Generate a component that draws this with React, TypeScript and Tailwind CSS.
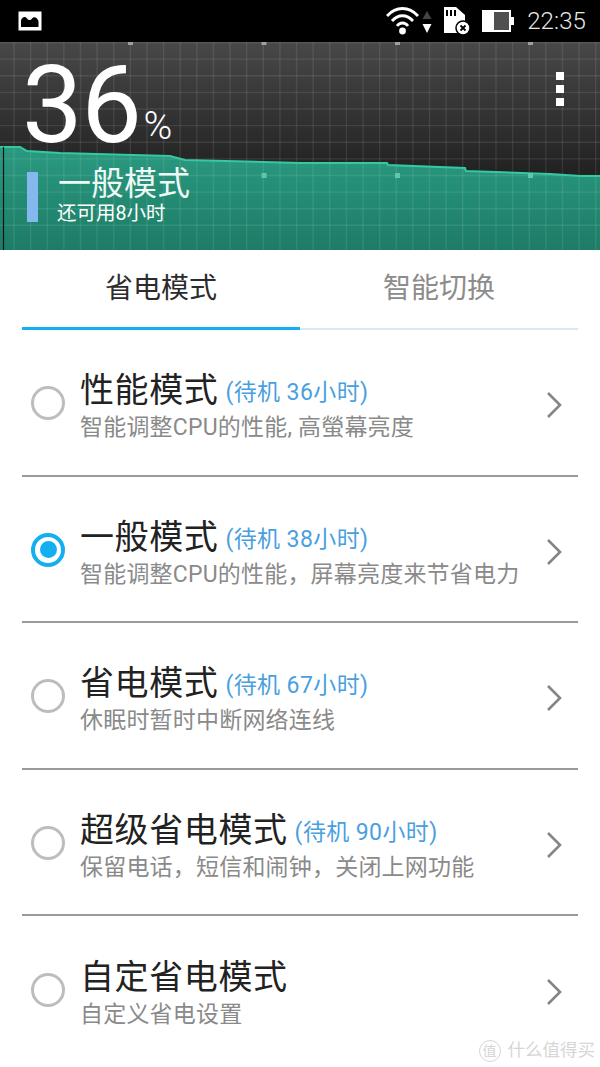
/**
 * Battery saver screen - power modes list with battery history header
 */

const FONT = 'font-["Roboto","Noto_Sans_CJK_SC",sans-serif]';

const modes = [
  { title: '性能模式', standby: '(待机 36小时)', desc: '智能调整CPU的性能, 高螢幕亮度', selected: false },
  { title: '一般模式', standby: '(待机 38小时)', desc: '智能调整CPU的性能，屏幕亮度来节省电力', selected: true },
  { title: '省电模式', standby: '(待机 67小时)', desc: '休眠时暂时中断网络连线', selected: false },
  { title: '超级省电模式', standby: '(待机 90小时)', desc: '保留电话，短信和闹钟，关闭上网功能', selected: false },
  { title: '自定省电模式', standby: '', desc: '自定义省电设置', selected: false },
];

const gridX = Array.from({ length: 36 }, (_, i) => 14 + i * 16.62);
const gridY = Array.from({ length: 12 }, (_, i) => 0.5 + i * 16.62);
const line = '0,105 20,105 27,109 60,111 170,114 185,118 300,121 387,121 388,123 465,126 466,129 550,132 580,134 600,134';

function BatteryChart() {
  return (
    <svg className="absolute inset-0" width="600" height="208" viewBox="0 0 600 208">
      <defs>
        <linearGradient id="sky" x1="0" y1="0" x2="0" y2="1">
          <stop offset="0" stopColor="#484848" />
          <stop offset="0.7" stopColor="#1d1d1d" />
          <stop offset="1" stopColor="#1d1d1d" />
        </linearGradient>
        <linearGradient id="fill" x1="0" y1="0" x2="0" y2="1">
          <stop offset="0" stopColor="#2a9a80" />
          <stop offset="1" stopColor="#1d7c66" />
        </linearGradient>
      </defs>
      <rect width="600" height="208" fill="url(#sky)" />
      <polygon points={`${line} 600,208 0,208`} fill="url(#fill)" />
      {gridX.map((x) => (
        <line key={x} x1={x} x2={x} y1="0" y2="208" stroke="#fff" strokeOpacity="0.09" strokeWidth="1.4" />
      ))}
      {gridY.map((y) => (
        <line key={y} x1="0" x2="600" y1={y} y2={y} stroke="#fff" strokeOpacity="0.09" strokeWidth="1.4" />
      ))}
      <polyline points={line} fill="none" stroke="#35c9a2" strokeWidth="2" />
      <line x1="3.5" x2="3.5" y1="105" y2="208" stroke="#0c1512" strokeWidth="1.2" />
      {[130.5, 264, 397.5, 530.5].map((x) => (
        <rect key={x} x={x - 2.5} y="0" width="5" height="3" fill="#a0a0a0" />
      ))}
      {[264, 397.5, 530.5].map((x) => (
        <rect key={x} x={x - 2.5} y="131" width="5" height="5" fill="#5fc8ac" />
      ))}
    </svg>
  );
}

function StatusBar() {
  return (
    <div className="h-[42px] bg-black flex items-center pl-[18px] pr-[14px] shrink-0">
      <svg width="24" height="20" viewBox="0 0 24 20">
        <rect x="0.5" y="0.5" width="23" height="19" fill="#fff" />
        <path d="M3 16 V9.5 C4 6 7 5 9 7.5 C10.5 9.5 12.5 9.5 14 7.5 C16 5 19 6 20.5 10 V16 Z" fill="#000" />
      </svg>
      <div className="flex-1" />
      <svg width="34" height="28" viewBox="0 0 34 28" className="mr-[2px]">
        <path d="M1 9 C10 -1 23 -1 32 9" fill="none" stroke="#fff" strokeWidth="2.8" />
        <path d="M6 14 C12 7 21 7 27 14" fill="none" stroke="#fff" strokeWidth="2.8" />
        <path d="M11 19 C14 15 19 15 22 19" fill="none" stroke="#fff" strokeWidth="2.8" />
        <circle cx="16.5" cy="24" r="3.4" fill="#fff" />
      </svg>
      <svg width="10" height="24" viewBox="0 0 10 24" className="mr-[11px]">
        <polygon points="5,2 9.5,10 0.5,10" fill="#444" />
        <polygon points="5,24 9.5,15 0.5,15" fill="#fff" />
      </svg>
      <svg width="28" height="28" viewBox="0 0 28 28" className="mr-[11px]">
        <path d="M1 0 H13 L22 8 V26 H1 Z" fill="#fff" />
        <path d="M4 3 V9 M8 3 V9 M12 3 V9" stroke="#000" strokeWidth="2" />
        <circle cx="20" cy="21" r="7" fill="#fff" stroke="#000" strokeWidth="1.5" />
        <path d="M17.5 18.5 L22.5 23.5 M22.5 18.5 L17.5 23.5" stroke="#000" strokeWidth="1.8" />
      </svg>
      <svg width="32" height="22" viewBox="0 0 32 22" className="mr-[13px]">
        <rect x="1" y="1" width="27" height="20" fill="#505050" stroke="#fff" strokeWidth="2" />
        <rect x="1" y="1" width="11" height="20" fill="#fff" />
        <rect x="28" y="7" width="4" height="8" fill="#fff" />
      </svg>
      <span className="text-[24px] leading-none font-light text-[#e8e8e8] tracking-[0.1px]">22:35</span>
    </div>
  );
}

function Header() {
  return (
    <div className="relative h-[208px] overflow-hidden shrink-0">
      <BatteryChart />
      <div className="relative flex pl-[22px] h-[106px]">
        <span className="h-[92px] text-[108px] leading-[92px] font-normal text-white mt-[17px] tracking-[-1.5px]">36</span>
        <span className="h-[39px] text-[39px] leading-none font-light text-white mt-[65px] ml-[3px]">%</span>
        <div className="flex-1" />
        <div className="flex flex-col gap-[5px] mt-[30px] mr-[36px]">
          <div className="w-[8px] h-[8px] bg-white" />
          <div className="w-[8px] h-[8px] bg-white" />
          <div className="w-[8px] h-[8px] bg-white" />
        </div>
      </div>
      <div className="relative flex items-center pl-[27px] mt-[19px]">
        <div className="w-[11px] h-[50px] bg-[#85b8ee]" />
        <div className="ml-[20px] text-white mt-[-1px]">
          <div className="text-[33px] leading-[36px] text-[#eef8f5]">一般模式</div>
          <div className="text-[19.5px] leading-[24px] ml-[-1px]">还可用8小时</div>
        </div>
      </div>
    </div>
  );
}

function Tabs() {
  return (
    <div className="flex h-[80px] mx-[22px] border-b-2 border-[#d8e9f0] shrink-0">
      <div className="w-[278px] flex items-center justify-center border-b-[3px] border-[#14aff0] mb-[-2px] text-[28px] text-[#2c2c2c]">
        省电模式
      </div>
      <div className="flex-1 flex items-center justify-center text-[28px] text-[#8c8c8c]">
        智能切换
      </div>
    </div>
  );
}

function Radio({ selected }: { selected: boolean }) {
  return (
    <div
      className={
        selected
          ? 'w-[34px] h-[34px] mt-[2px] rounded-full border-[4px] border-[#14aff0] flex items-center justify-center shrink-0'
          : 'w-[34px] h-[34px] mt-[2px] rounded-full border-[3px] border-[#bdbdbd] flex items-center justify-center shrink-0'
      }
    >
      {selected && <div className="w-[17px] h-[17px] rounded-full bg-[#14aff0]" />}
    </div>
  );
}

function ModeRow({ mode, last }: { mode: (typeof modes)[number]; last: boolean }) {
  return (
    <div
      className={
        last
          ? 'h-[146.5px] mx-[22px] pl-[9px] flex items-center'
          : 'h-[146.5px] mx-[22px] pl-[9px] flex items-center border-b-2 border-[#9a9a9a]'
      }
    >
      <Radio selected={mode.selected} />
      <div className="ml-[15px] flex-1 min-w-0 mt-[6px]">
        <div className="flex items-baseline h-[44px]">
          <span className="text-[34px] leading-[44px] tracking-[0.6px] text-[#222] translate-y-[1px]">{mode.title}</span>
          <span className="text-[23px] tracking-[0.4px] ml-[7px] text-[#4a9fe0] translate-y-[-1px]">{mode.standby}</span>
        </div>
        <div className="text-[23px] leading-[30px] tracking-[0.2px] text-[#8a8a8a] whitespace-nowrap mt-[2px]">{mode.desc}</div>
      </div>
      <svg width="16" height="28" viewBox="0 0 16 28" className="mr-[16px] mt-[6px]">
        <path d="M2 2 L14 14 L2 26" fill="none" stroke="#858585" strokeWidth="2.6" />
      </svg>
    </div>
  );
}

export default function App() {
  return (
    <div className={`${FONT} relative w-[600px] h-[1067px] bg-white overflow-hidden flex flex-col`}>
      <StatusBar />
      <Header />
      <Tabs />
      {modes.map((mode, i) => (
        <ModeRow key={mode.title} mode={mode} last={i === modes.length - 1} />
      ))}

      {/* Watermark */}
      <div className="absolute right-[5px] bottom-[5px] flex items-center text-[#d6d6d6]">
        <div className="w-[22px] h-[22px] rounded-full border border-[#d6d6d6] flex items-center justify-center text-[14px] leading-none">
          值
        </div>
        <span className="ml-[7px] text-[17.5px] leading-none">什么值得买</span>
      </div>
    </div>
  );
}
